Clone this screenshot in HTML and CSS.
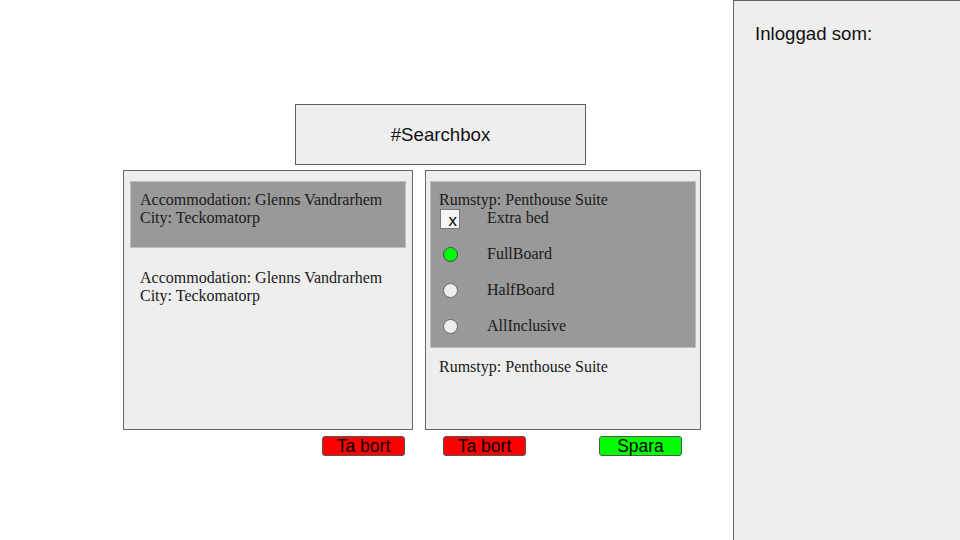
FILE: index.html
```html
<!DOCTYPE html>
<html>
<head>
<meta charset="utf-8">
<link rel="stylesheet" href="styles.css">
</head>
<body>
<div class="page">
  <main class="main">
    <div class="searchbox">#Searchbox</div>
    <div class="panels">
      <section class="panel panel-left">
        <div class="acc acc-selected">
          <div>Accommodation: Glenns Vandrarhem</div>
          <div>City: Teckomatorp</div>
        </div>
        <div class="acc">
          <div>Accommodation: Glenns Vandrarhem</div>
          <div>City: Teckomatorp</div>
        </div>
      </section>
      <section class="panel panel-right">
        <div class="room room-selected">
          <div>Rumstyp: Penthouse Suite</div>
          <div class="opt opt-first">
            <span class="ctl"><span class="checkbox">x</span></span>
            <span>Extra bed</span>
          </div>
          <div class="opt">
            <span class="ctl"><span class="radio radio-on"></span></span>
            <span>FullBoard</span>
          </div>
          <div class="opt">
            <span class="ctl"><span class="radio"></span></span>
            <span>HalfBoard</span>
          </div>
          <div class="opt">
            <span class="ctl"><span class="radio"></span></span>
            <span>AllInclusive</span>
          </div>
        </div>
        <div class="room">
          <div>Rumstyp: Penthouse Suite</div>
        </div>
      </section>
    </div>
    <div class="buttons">
      <button class="btn btn-red btn-1">Ta bort</button>
      <button class="btn btn-red btn-2">Ta bort</button>
      <button class="btn btn-green btn-3">Spara</button>
    </div>
  </main>
  <aside class="sidebar">Inloggad som:</aside>
</div>
</body>
</html>
```
FILE: styles.css
```css
* { box-sizing: border-box; }
html, body { margin: 0; padding: 0; background: #ffffff; }
body { width: 960px; height: 540px; overflow: hidden; }
.page { display: flex; height: 540px; }
.main {
  width: 733px;
  padding-top: 104px;
  padding-left: 123px;
}
.searchbox {
  margin-left: 172px;
  width: 291px;
  height: 61px;
  background: #eeeeee;
  border: 1px solid #5f5f5f;
  display: flex;
  align-items: center;
  justify-content: center;
  font-family: "Liberation Sans", Arial, sans-serif;
  font-size: 18.67px;
  color: #111;
}
.panels {
  display: flex;
  gap: 12px;
  margin-top: 5px;
  font-family: "Liberation Serif", "Times New Roman", serif;
  font-size: 16px;
  line-height: 18px;
  color: #1a1a1a;
}
.panel {
  height: 260px;
  background: #eeeeee;
  border: 1px solid #666666;
}
.panel-left { width: 290px; padding: 10px 6px; }
.panel-right { width: 276px; padding: 10px 4px; }
.acc { padding: 21px 10px; }
.acc.acc-selected {
  height: 67px;
  padding: 9px 9px;
  background: #999999;
  border: 1px solid #bdbdbd;
}
.room { padding: 10px 9px; }
.room.room-selected {
  background: #999999;
  border: 1px solid #bdbdbd;
  padding: 9px 8px 12px 8px;
}
.opt { display: flex; align-items: center; height: 18px; margin-top: 18px; }
.opt.opt-first { margin-top: 0; }
.ctl { width: 48px; display: flex; align-items: center; }
.checkbox {
  margin-left: 1px;
  margin-top: 1px;
  width: 20px;
  height: 20px;
  background: #f5f5f5;
  border: 1px solid #777;
  font-family: "Liberation Sans", Arial, sans-serif;
  font-size: 17px;
  line-height: 21px;
  text-align: right;
  padding-right: 2px;
  color: #000;
}
.radio {
  margin-left: 4px;
  margin-top: 1px;
  width: 15px;
  height: 15px;
  border-radius: 50%;
  background: #eeeeee;
  border: 1px solid #666;
}
.radio.radio-on { background: #00ff00; border-color: #444; }
.buttons {
  height: 30px;
  margin-top: 6px;
  display: flex;
}
.btn {
  height: 20px;
  width: 83px;
  border: 1px solid #555;
  border-radius: 3px;
  font-family: "Liberation Sans", Arial, sans-serif;
  font-size: 17.5px;
  line-height: 18px;
  padding: 0;
  color: #000;
}
.btn-red { background: #ff0000; }
.btn-green { background: #00ff00; }
.btn-1 { margin-left: 199px; }
.btn-2 { margin-left: 38px; }
.btn-3 { margin-left: 73px; }
.sidebar {
  width: 227px;
  height: 540px;
  background: #eeeeee;
  border-left: 1px solid #666;
  border-top: 1px solid #666;
  padding: 22px 0 0 21px;
  font-family: "Liberation Sans", Arial, sans-serif;
  font-size: 18.67px;
  color: #111;
}
```
